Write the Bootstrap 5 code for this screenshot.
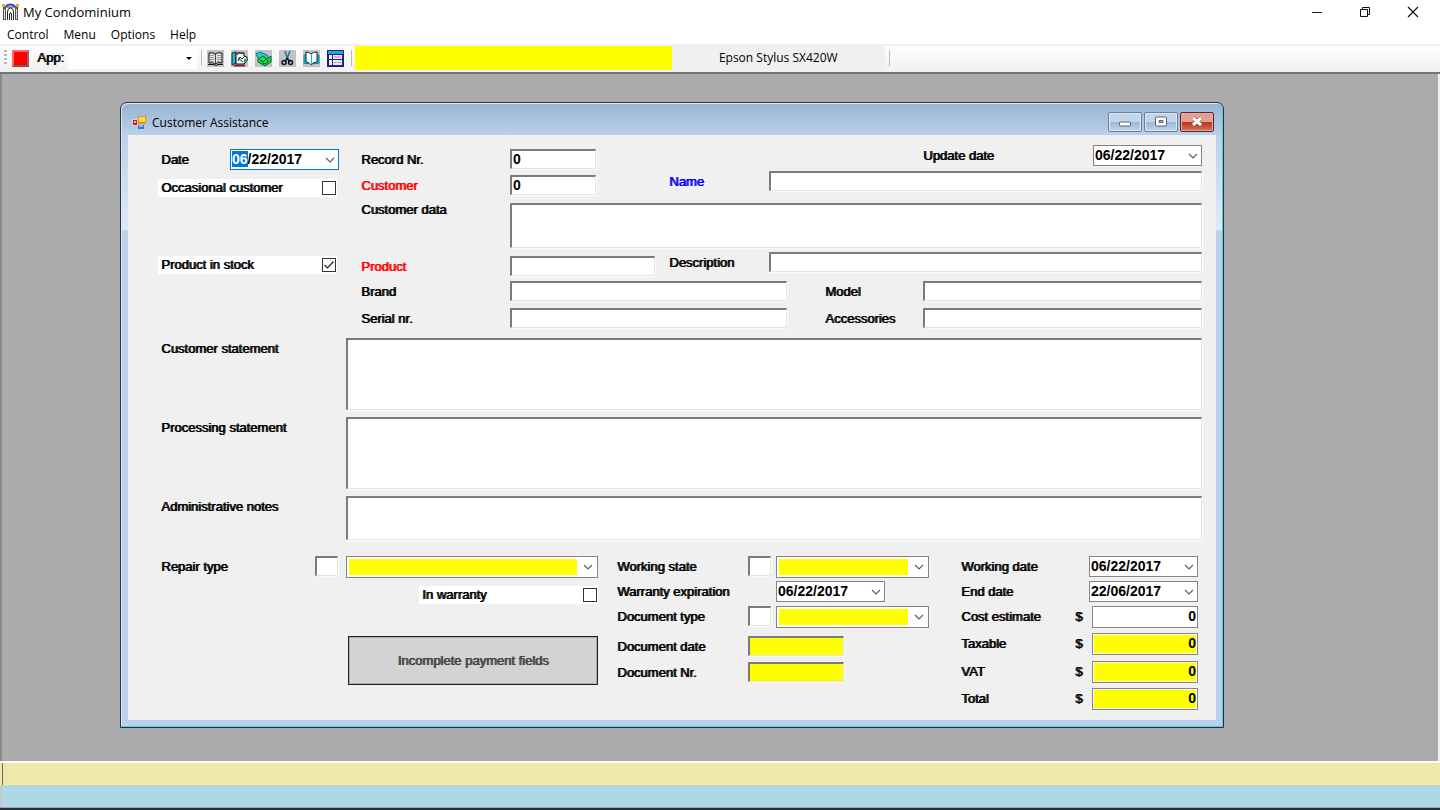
<!DOCTYPE html>
<html lang="en">
<head>
<meta charset="utf-8">
<meta name="viewport" content="width=device-width, initial-scale=1">
<title>My Condominium</title>
<link rel="stylesheet" href="https://cdn.jsdelivr.net/npm/bootstrap@5.3.0/dist/css/bootstrap.min.css">
<style>
  body { font-family: "Open Sans", "Noto Sans", sans-serif; font-size: 12px; line-height: 16px; color: #000; background: #fff; }
  button, input, select, textarea { font-family: inherit; }
  .app-title { height: 25px; padding: 0 3px 2px 2px; font-size: 13px; }
  .sys-btn { width: 48px; height: 22px; border: 0; background: none; padding: 0 0 2px; }
  .menu-bar { height: 19px; gap: 15px; padding-left: 7px; }
  .menu-bar a { color: #000; text-decoration: none; }

  /* toolbar strip */
  .tool-strip { height: 30px; padding: 1px 0 3px 4px; background: linear-gradient(#fdfdfd, #f1f1f1); border-top: 2px solid #f0f0f0; border-bottom: 2px solid #747474; }
  .grip { width: 3px; height: 16px; background: repeating-linear-gradient(#b9b9b9 0 2px, transparent 2px 4px); margin-right: 5px; }
  .red-btn { width: 17px; height: 17px; padding: 0; background: #f00; border: 2px solid; border-color: #f66 #8c6464 #a04444 #f66; }
  .strip-label { font-family: "Liberation Sans", Arial, sans-serif; font-size: 13px; text-shadow: 1px 0 currentColor; padding: 0 4px 0 8px; }
  .app-select { width: 129px; height: 22px; border: 0; border-radius: 0; padding: 0; background: #fff url("data:image/svg+xml,%3Csvg xmlns='http://www.w3.org/2000/svg' width='6' height='3'%3E%3Cpath d='M0 0h6L3 3z'/%3E%3C/svg%3E") no-repeat right 5px center; background-size: 6px 3px; }
  .v-rule { width: 1px; height: 16px; background: #bdbdbd; }
  .tool-group { gap: 7px; padding: 0 7px 0 5px; }
  .tool-btn { width: 17px; height: 17px; padding: 0; border: 0; background: #c3c3c3; display: block; }
  .tool-btn svg { display: block; width: 17px; height: 17px; }
  .progress-cell { width: 317px; height: 24px; margin-left: 3px; background: #ff0; }
  .printer-cell { width: 213px; height: 24px; background: #f0f0f0; line-height: 24px; }

  /* work area */
  .desk { background: #ababab; border-left: 2px solid #8a8a8a; border-right: 2px solid #f0f0f0; padding: 28px 214px 33px 118px; }
  .child-win { border: 1px solid #2b3338; border-radius: 7px 7px 0 0; background: linear-gradient(#98b3d1, #b9d1ea 32px, #d9e6f4 110px, #dce8f5 127px, #b9d1ea 128px); box-shadow: inset -1px -1px #3ed4ea, inset 1px 1px #dbe8f5; padding: 0 7px 7px; }
  .win-title { height: 32px; padding: 5px 2px 0 4px; }
  .caption-text { padding: 7px 0 0 5px; }
  .win-icon { margin-top: 7px; }
  .win-btns { gap: 2px; padding-top: 4px; }
  .win-btn { width: 34px; height: 20px; padding: 0; border: 1px solid #6a7f9c; border-radius: 2px; box-shadow: inset 0 0 0 1px #dce8f5; background: linear-gradient(#c3d6eb 48%, #9db8d6 50%, #bdd3ea); }
  .win-btn svg { display: block; margin: auto; }
  .win-btn.shut { border-color: #5c2430; box-shadow: inset 0 0 0 1px #eaa79c; background: linear-gradient(#e6a093 48%, #b8331b 50%, #d4745c); }
  .client { background: #f0f0f0; padding: 10px 14px 10px 30px; font-family: "Liberation Sans", Arial, sans-serif; font-size: 13px; }

  /* form parts */
  .lbl { line-height: 22px; padding-left: 3px; text-shadow: 1px 0 currentColor; white-space: nowrap; }
  .lbl-top { line-height: 14px; }
  .c-red { color: #f00; }
  .c-blue { color: #00f; }
  .inset, .inset:focus { display: block; width: 100%; height: 20px; min-height: 0; padding: 0 1px 1px; border: 1px solid; border-width: 2px 1px 1px 2px; border-color: #7b7b7b #e5e5e5 #e5e5e5 #7b7b7b; border-radius: 0; background-color: #fff; box-shadow: 1px 1px #fafafa; color: #000; font-size: 14px; font-weight: 700; line-height: 16px; resize: none; }
  textarea.inset.h-data { height: 45px; }
  textarea.inset.h-text { height: 72px; }
  textarea.inset.h-note { height: 44px; }
  .inset.w-code { width: 86px; }
  .inset.w-prod { width: 145px; }
  .inset.w-tiny { width: 23px; }
  .inset.w-doc { width: 96px; }
  .drop { --chev: url("data:image/svg+xml,%3Csvg xmlns='http://www.w3.org/2000/svg' width='10' height='6'%3E%3Cpath d='M1 1l4 4 4-4' fill='none' stroke='%23606060' stroke-width='1.2'/%3E%3C/svg%3E"); }
  .date-box, .date-box:focus { width: 109px; height: 21px; min-height: 0; padding: 0 22px 2px 1px; border: 1px solid #858585; border-radius: 0; color: #000; font-size: 14px; font-weight: 700; line-height: 16px; background: #fff var(--chev) no-repeat right 3px center; box-shadow: none; }
  .date-box.active { border-color: #0078d7; }
  .date-box::selection { background: #0078d7; color: #fff; }
  .combo { width: 252px; height: 22px; padding: 0; border: 1px solid #858585; border-radius: 0; background: var(--chev) no-repeat right 4px center, linear-gradient(#ff0, #ff0) no-repeat 2px 2px / calc(100% - 22px) calc(100% - 4px), #fff; }
  .combo.w-combo { width: 153px; }
  .money { width: 106px; height: 22px; min-height: 0; padding: 0 1px 2px; border: 1px solid #858585; border-radius: 0; color: #000; font-size: 14px; font-weight: 700; line-height: 16px; text-align: right; background: #fff; box-shadow: inset 0 0 0 1px #fff; }
  .fill-y, .fill-y:focus { background-color: #ff0; }
  .tick-row { width: 179px; height: 18px; background: #fff; padding-right: 1px; }
  .tick-row .lbl { line-height: 18px; }
  .date-row { width: 181px; }
  .tick { width: 14px; height: 14px; margin: 0; border: 1px solid #333; background: #fff; }
  .tick.form-check-input[type=checkbox] { border-radius: 0; }
  .tick.form-check-input:checked { background: #fff url("data:image/svg+xml,%3Csvg xmlns='http://www.w3.org/2000/svg' viewBox='0 0 12 12'%3E%3Cpath d='M1.500 6l3 3L10.500 2.500' fill='none' stroke='%23222' stroke-width='1.200'/%3E%3C/svg%3E"); border-color: #333; }
  .pay-btn { width: 250px; height: 49px; margin-top: 32px; border: 1px solid #222; outline: 1px solid #8888; outline-offset: -2px; border-radius: 0; background: #d3d3d3; color: #444; font-size: 13px; text-shadow: 1px 0 currentColor; padding: 0; }

  .top-grid { display: grid; grid-template-columns: 200px 152px 156px 103px 53px 101px 1fr; grid-template-rows: 26px 32px 49px 29px 27px 30px; align-items: start; }
  .span-data { grid-column: 3 / -1; }
  .span-name { grid-column: 5 / -1; }
  .inset.span-brand { grid-column: 3 / 6; width: 277px; }
  .col-a { grid-column: 1; }
  .col-b { grid-column: 2; }
  .col-c { grid-column: 3; }
  .col-d { grid-column: 4; }
  .col-f { grid-column: 5 / 7; padding-left: 56px; }
  .col-g { grid-column: 7; }
  .r1 { grid-row: 1; }
  .r2 { grid-row: 2; }
  .r3 { grid-row: 3; }
  .r4 { grid-row: 4; }
  .r5 { grid-row: 5; }
  .r6 { grid-row: 6; }
  .memo-grid { display: grid; grid-template-columns: 188px 1fr; grid-template-rows: 79px 79px 60px; align-items: start; }
  .foot-grid { display: grid; grid-template-columns: 440px 328px 240px; justify-content: space-between; padding-right: 4px; }
  .state-grid { display: grid; grid-template-columns: 134px 28px 1fr; grid-template-rows: 25px 25px 30px 26px 22px; align-items: start; }
  .sum-grid { display: grid; grid-template-columns: 114px 17px 109px; grid-template-rows: 25px 25px 27px 28px 27px 22px; align-items: start; }
  .sum-grid > input { justify-self: end; }
  .span-2 { grid-column: span 2; }

  /* status area */
  .status-a { height: 25px; background: #eee8aa; border-top: 2px solid #fff; border-bottom: 1px solid #c5d5b5; padding-left: 2px; }
  .status-a span { width: 1px; background: #667; }
  .status-b { height: 21px; background: #add8e6; border-left: 2px solid #c9c9c9; }
  .task-edge { height: 3px; background: #2a2f31; border-top: 1px solid #8ca7ae; }
</style>
</head>
<body class="d-flex flex-column min-vh-100">

<header>
  <div class="app-title d-flex align-items-center">
    <svg width="17" height="18" viewBox="0 0 17 18" aria-hidden="true"><path d="M4 3Q8 0 13 3" fill="none" stroke="#3338e8" stroke-width="2"/><path d="M1 3h3v14H1zM13 3h3v14h-3z" fill="#555"/><path d="M2.500 6v10M14.500 6v10" stroke="#ddd"/><path d="M5.500 17V9q0-4 3-4t3 4v8M7.500 17v-6q1-3 2 0v6M4 4h9" fill="none" stroke="#222"/><path d="M0 1h3v3H0zM14 1h3v3h-3z" fill="#e7a52a"/></svg>
    <span class="ps-1 flex-fill">My Condominium</span>
    <button class="sys-btn" aria-label="Minimize"><svg width="12" height="12"><path d="M1 6.500h10" stroke="#222"/></svg></button>
    <button class="sys-btn" aria-label="Restore"><svg width="12" height="12" fill="none" stroke="#111"><path d="M1.500 3.500h7v7h-7zM3.500 3V1.500h7v7H9"/></svg></button>
    <button class="sys-btn" aria-label="Close"><svg width="12" height="12"><path d="M1 1l10 10M11 1L1 11" stroke="#111" stroke-width="1.200"/></svg></button>
  </div>
  <nav class="menu-bar d-flex align-items-center" aria-label="Main">
    <a href="#">Control</a><a href="#">Menu</a><a href="#">Options</a><a href="#">Help</a>
  </nav>
  <div class="tool-strip d-flex align-items-center" role="toolbar">
    <span class="grip"></span>
    <button class="red-btn" aria-label="Stop"></button>
    <label class="strip-label" for="app">App:</label>
    <select id="app" class="form-select app-select"><option></option></select>
    <span class="v-rule ms-1"></span>
    <div class="tool-group d-flex">
      <button class="tool-btn" aria-label="Open register"><svg viewBox="0 0 17 17"><path d="M2 3q4-1 6 1 2-2 7-1v10q-5-1-7 1-2-2-6-1z" fill="#e2e2e2" stroke="#111"/><path d="M8.500 4v10" stroke="#444"/><path d="M3 5.500h4M3 7.500h4M3 9.500h4M3 11.500h4M10 5.500h4M10 7.500h4M10 9.500h4M10 11.500h4" stroke="#999"/><path d="M1 14.500h6l2 1 2-1h5" fill="none" stroke="#111"/></svg></button>
      <button class="tool-btn" aria-label="Edit register"><svg viewBox="0 0 17 17"><path d="M1 3l4-1v11l-4 2z" fill="#19b9c4" stroke="#135"/><path d="M5 3h8v3l3 1v4l-3 3H5z" fill="#f4f4f4" stroke="#111"/><path d="M6 5l3-3 2 2 2-2M7 11l2-4 2 2 3-3M7 8l5 4" fill="none" stroke="#333"/><path d="M13 9h3v3l-3 1z" fill="#22a34a"/><path d="M3 15.500h11" stroke="#7e2020" stroke-width="2"/></svg></button>
      <button class="tool-btn" aria-label="Payments"><svg viewBox="0 0 17 17"><path d="M1 4l4-2 7 3 3 4-4 3-8-4z" fill="#2cc9cf" stroke="#177"/><path d="M3 9l5-3 4 3 4-3v6l-6 4-7-4z" fill="#21dd37" stroke="#064"/><path d="M5 10l3 2 3-3 2 2M7 13l3 1 4-3" fill="none" stroke="#075a22"/></svg></button>
      <button class="tool-btn" aria-label="Cut"><svg viewBox="0 0 17 17" fill="none"><path d="M6 1l3 9M11 1L8 9" stroke="#157e8c" stroke-width="1.500"/><path d="M8 8l3 4M8 8l-2 4" stroke="#112" stroke-width="1.500"/><circle cx="5" cy="12.500" r="2" stroke="#113" stroke-width="1.500"/><circle cx="11.500" cy="12.500" r="2" stroke="#113" stroke-width="1.500"/></svg></button>
      <button class="tool-btn" aria-label="Open book"><svg viewBox="0 0 17 17"><path d="M1 4h2v10H1zM14 4h2v10h-2z" fill="#16c6cf"/><path d="M3 2q3 0 5 2 2-2 6-2v10q-4 0-6 3-2-3-5-3z" fill="#fff" stroke="#123"/><path d="M8.500 4v10" stroke="#19b9c4"/><path d="M1 5v8.500h6l1 1.500 2-1.500h6V5" fill="none" stroke="#128a95"/></svg></button>
      <button class="tool-btn" aria-label="Table view"><svg viewBox="0 0 17 17"><path d="M0 0h17v17H0z" fill="#1a237e"/><path d="M1 1h15v3H1z" fill="#1fa6e8"/><path d="M2 5h3v4H2zM6 5h9v4H6zM2 10h3v5H2zM6 10h9v5H6z" fill="#eee"/><path d="M7 12.500h3M11 12.500h3M7 7h7" stroke="#b7b"/></svg></button>
    </div>
    <span class="v-rule"></span>
    <div class="progress-cell"></div>
    <div class="printer-cell text-center">Epson Stylus SX420W</div>
    <span class="v-rule ms-1"></span>
  </div>
</header>

<main class="desk flex-fill">
  <section class="child-win">
    <div class="win-title d-flex align-items-start">
      <svg class="win-icon" width="15" height="15" viewBox="0 0 15 15" aria-hidden="true"><path d="M0 4h6v7H0z" fill="#d9d2cc"/><path d="M1 5h4v5H1z" fill="#c32214"/><path d="M2 6h2v2H2z" fill="#f6a090"/><path d="M6 1h8v8H6z" fill="#d79a12"/><path d="M7 2h6v5H7z" fill="#ffd84c"/><path d="M6 10h6v4H6z" fill="#3b74d8"/><path d="M7 10h4v2H7z" fill="#8fb7f7"/></svg>
      <span class="caption-text flex-fill">Customer Assistance</span>
      <div class="win-btns d-flex">
        <button class="win-btn" aria-label="Minimize window"><svg width="14" height="12"><rect x="1.500" y="6" width="11" height="4" rx="1" fill="#fff" stroke="#56657c"/></svg></button>
        <button class="win-btn" aria-label="Maximize window"><svg width="14" height="12"><rect x="1.500" y="1" width="11" height="9" rx="1" fill="#fff" stroke="#56657c"/><path d="M5 4.500h4v2H5z" fill="#9db8d6" stroke="#56657c"/></svg></button>
        <button class="win-btn shut" aria-label="Close window"><svg width="14" height="12"><path d="M3 2l8 7M11 2L3 9" stroke="#5a3940" stroke-width="4"/><path d="M3 2l8 7M11 2L3 9" stroke="#fff" stroke-width="3"/></svg></button>
      </div>
    </div>

    <form class="client drop">
      <div class="top-grid">
        <div class="date-row col-a r1 mt-1 d-flex justify-content-between">
          <label class="lbl" for="date">Date</label>
          <input id="date" class="form-control date-box active" value="06/22/2017">
        </div>
        <div class="tick-row col-a r2 mt-2 d-flex align-items-center justify-content-between">
          <label class="lbl" for="occ">Occasional customer</label>
          <input id="occ" type="checkbox" class="form-check-input tick">
        </div>
        <div class="tick-row col-a r4 mt-1 d-flex align-items-center justify-content-between">
          <label class="lbl" for="stock">Product in stock</label>
          <input id="stock" type="checkbox" class="form-check-input tick" checked>
        </div>

        <label class="lbl col-b r1 mt-1" for="rec">Record Nr.</label>
        <input id="rec" class="form-control inset w-code col-c r1 mt-1" value="0">
        <div class="col-g r1 d-flex justify-content-between">
          <label class="lbl ps-0" for="upd">Update date</label>
          <input id="upd" class="form-control date-box" value="06/22/2017">
        </div>

        <label class="lbl c-red col-b r2 mt-1" for="cust">Customer</label>
        <input id="cust" class="form-control inset w-code col-c r2 mt-1" value="0">
        <label class="lbl c-blue col-d r2" for="name">Name</label>
        <input id="name" class="form-control inset span-name r2">

        <label class="lbl lbl-top col-b r3" for="cdata">Customer data</label>
        <textarea id="cdata" class="form-control inset h-data span-data r3"></textarea>

        <label class="lbl c-red col-b r4 mt-1" for="prod">Product</label>
        <input id="prod" class="form-control inset w-prod col-c r4 mt-1">
        <label class="lbl col-d r4" for="desc">Description</label>
        <input id="desc" class="form-control inset span-name r4">

        <label class="lbl col-b r5" for="brand">Brand</label>
        <input id="brand" class="form-control inset span-brand r5">
        <label class="lbl col-f r5" for="model">Model</label>
        <input id="model" class="form-control inset col-g r5">

        <label class="lbl col-b r6" for="serial">Serial nr.</label>
        <input id="serial" class="form-control inset span-brand r6">
        <label class="lbl col-f r6" for="acc">Accessories</label>
        <input id="acc" class="form-control inset col-g r6">
      </div>

      <div class="memo-grid">
        <label class="lbl" for="cs">Customer statement</label>
        <textarea id="cs" class="form-control inset h-text"></textarea>
        <label class="lbl" for="ps">Processing statement</label>
        <textarea id="ps" class="form-control inset h-text"></textarea>
        <label class="lbl" for="an">Administrative notes</label>
        <textarea id="an" class="form-control inset h-note"></textarea>
      </div>

      <div class="foot-grid">
        <div class="d-flex flex-column">
          <div class="d-flex">
            <label class="lbl me-auto" for="rtype">Repair type</label>
            <input class="form-control inset w-tiny me-2" aria-label="Repair code">
            <select id="rtype" class="form-select combo"><option></option></select>
          </div>
          <div class="tick-row align-self-end mt-2 d-flex align-items-center justify-content-between">
            <label class="lbl" for="warr">In warranty</label>
            <input id="warr" type="checkbox" class="form-check-input tick">
          </div>
          <button type="button" class="btn pay-btn align-self-end">Incomplete payment fields</button>
        </div>

        <div class="state-grid">
          <label class="lbl" for="ws">Working state</label>
          <input class="form-control inset w-tiny" aria-label="State code">
          <select id="ws" class="form-select combo w-combo"><option></option></select>
          <label class="lbl span-2" for="we">Warranty expiration</label>
          <input id="we" class="form-control date-box" value="06/22/2017">
          <label class="lbl" for="dt">Document type</label>
          <input class="form-control inset w-tiny" aria-label="Document code">
          <select id="dt" class="form-select combo w-combo"><option></option></select>
          <label class="lbl" for="dd">Document date</label>
          <input id="dd" class="form-control inset fill-y w-doc span-2">
          <label class="lbl" for="dn">Document Nr.</label>
          <input id="dn" class="form-control inset fill-y w-doc span-2">
        </div>

        <div class="sum-grid">
          <label class="lbl" for="wd">Working date</label>
          <input id="wd" class="form-control date-box span-2" value="06/22/2017">
          <label class="lbl" for="ed">End date</label>
          <input id="ed" class="form-control date-box span-2" value="22/06/2017">
          <label class="lbl" for="ce">Cost estimate</label><span class="lbl">$</span>
          <input id="ce" class="form-control money" value="0">
          <label class="lbl" for="tx">Taxable</label><span class="lbl">$</span>
          <input id="tx" class="form-control money fill-y" value="0">
          <label class="lbl" for="vat">VAT</label><span class="lbl">$</span>
          <input id="vat" class="form-control money fill-y" value="0">
          <label class="lbl" for="tot">Total</label><span class="lbl">$</span>
          <input id="tot" class="form-control money fill-y" value="0">
        </div>
      </div>
    </form>
  </section>
</main>

<footer>
  <div class="status-a d-flex"><span></span></div>
  <div class="status-b"></div>
  <div class="task-edge"></div>
</footer>

<script src="https://cdn.jsdelivr.net/npm/bootstrap@5.3.0/dist/js/bootstrap.bundle.min.js"></script>
<script>
  // the month part of the date is selected when the form opens
  const dateField = document.getElementById('date');
  dateField.focus({ preventScroll: true });
  dateField.setSelectionRange(0, 2);
</script>
</body>
</html>
